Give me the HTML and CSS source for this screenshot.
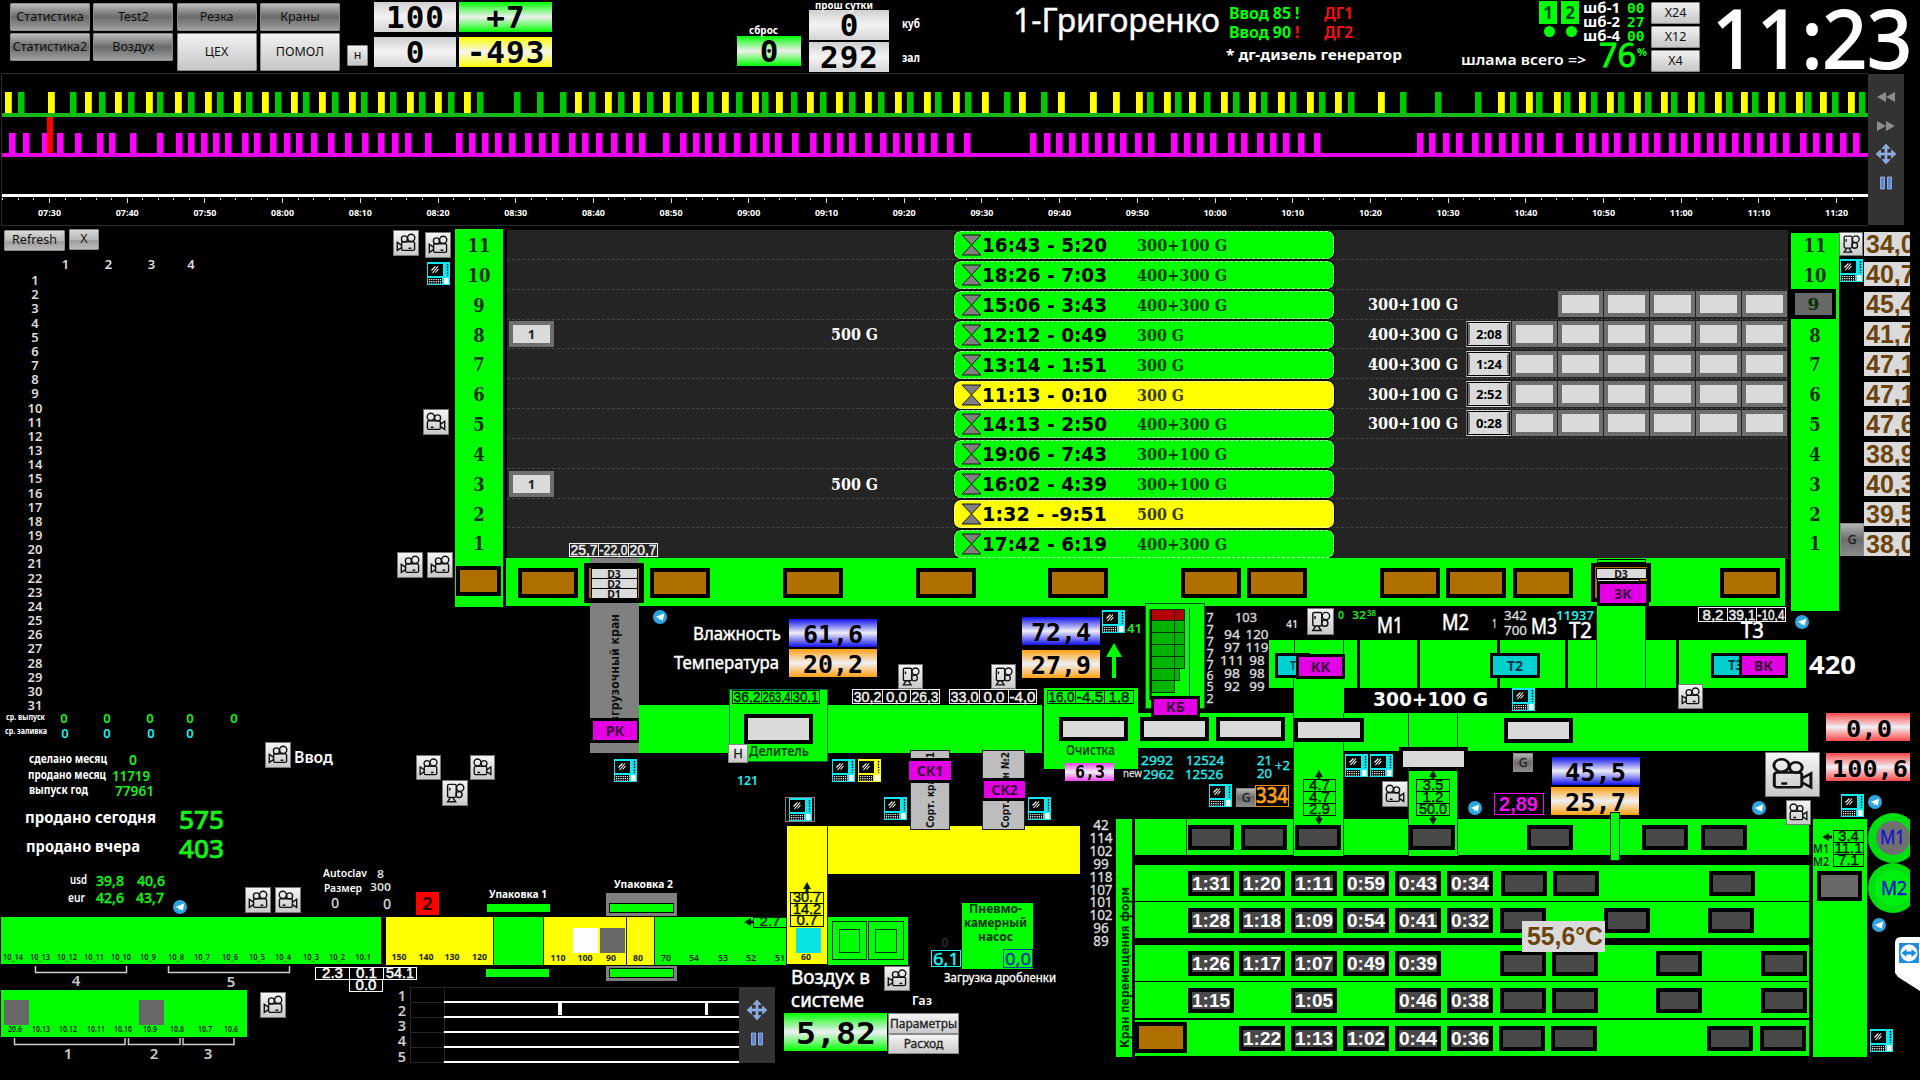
FILE: index.html
```html
<!DOCTYPE html>
<html lang="ru">
<head>
<meta charset="utf-8">
<title>ЦЕХ</title>
<link rel="stylesheet" href="styles.css">
</head>
<body>
<header class="topbar">
  <nav class="nav">
    <button class="btn dark">Статистика</button><button class="btn dark">Test2</button><button class="btn dark">Резка</button><button class="btn dark">Краны</button>
    <button class="btn dark">Статистика2</button><button class="btn dark">Воздух</button><button class="btn tall">ЦЕХ</button><button class="btn tall">ПОМОЛ</button>
  </nav>
  <button class="btn mini">н</button>
  <div class="counters">
    <b class="lcd gray">100</b><b class="lcd green">+7</b>
    <b class="lcd gray">0</b><b class="lcd yellow">-493</b>
  </div>
  <div class="reset"><span class="cap fit" data-w="29">сброс</span><b class="lcd green">0</b></div>
  <div class="prev"><span class="cap fit" data-w="58">прош сутки</span><b class="lcd gray">0</b><b class="lcd gray">292</b></div>
  <div class="units"><span class="fit" data-w="18">куб</span><span class="fit" data-w="18">зал</span></div>
  <div class="operator"><span class="fit" data-w="207">1-Григоренко</span></div>
  <div class="gens">
    <div class="gen"><span class="fit ok" data-w="62">Ввод 85</span><span class="ok mark">!</span><span class="fit bad" data-w="29">ДГ1</span></div>
    <div class="gen"><span class="fit ok" data-w="62">Ввод 90</span><span class="bad mark">!</span><span class="fit bad" data-w="29">ДГ2</span></div>
    <div class="note"><span class="fit" data-w="176">* дг-дизель генератор</span></div>
  </div>
  <div class="silo">
    <div class="silo-top">
      <div class="chip"><b>1</b><i></i></div><div class="chip"><b>2</b><i></i></div>
      <div class="silo-names"><span class="fit" data-w="37">шб-1</span><span class="fit" data-w="37">шб-2</span><span class="fit" data-w="37">шб-4</span></div>
      <div class="silo-vals"><span>00</span><span>27</span><span>00</span></div>
    </div>
    <div class="silo-sum"><span class="fit total" data-w="125">шлама всего =&gt;</span><span class="fit pct" data-w="37">76</span><span class="sign">%</span></div>
  </div>
  <div class="zooms"><button class="btn">X24</button><button class="btn">X12</button><button class="btn">X4</button></div>
  <div class="clock"><span class="fit" data-w="200">11:23</span></div>
</header>

<section class="timeline">
  <svg id="chart" width="1867" height="153" viewBox="1 73 1867 153"></svg>
  <div class="tools">
    <svg width="36" height="151" viewBox="1868 74 36 151">
      <g fill="#8c8c8c"><path d="M1886 92v10l-9-5zM1895 92v10l-9-5zM1877 121v10l9-5zM1886 121v10l9-5z"/></g>
      <use href="#move" x="1876" y="144"/><use href="#pause" x="1876" y="173"/>
    </svg>
  </div>
</section>

<main class="mimic">
  <section class="month">
    <div class="month-btns"><button class="btn mid refresh">Refresh</button><button class="btn mid close">X</button></div>
    <div class="month-head"><span>1</span><span>2</span><span>3</span><span>4</span></div>
    <ol class="days" id="days"></ol>
  </section>
  <section class="hall">
    <ol class="track left" id="trackL"></ol>
    <div class="lanes" id="lanes"></div>
    <ol class="track right" id="trackR"></ol>
    <div class="temps" id="temps"></div>
  </section>
  <svg id="scheme" class="scheme" width="1920" height="854" viewBox="0 226 1920 854">
    <defs>
      <linearGradient id="gBtn" x2="0" y2="1"><stop offset="0" stop-color="#f6f6f6"/><stop offset="1" stop-color="#c8c8c8"/></linearGradient>
      <linearGradient id="gDark" x2="0" y2="1"><stop offset="0" stop-color="#b8b8b8"/><stop offset=".5" stop-color="#6c6c6c"/><stop offset="1" stop-color="#8c8c8c"/></linearGradient>
      <symbol id="cam" viewBox="0 0 26 26" overflow="visible">
        <g fill="none" stroke="#111" stroke-width="1.4"><circle cx="11.4" cy="8.9" r="3"/><circle cx="18.2" cy="7.8" r="3.6"/><rect x="8.6" y="11.8" width="13" height="8.6" rx="1.4"/><path d="M8.5 15.2 4.3 12.4v8l4.2-2.8M15.5 18.2h2.8"/></g>
      </symbol>
      <symbol id="term" viewBox="0 0 23 23">
        <path fill="currentColor" d="M0 0h23v23H0z"/><path fill="#000" d="M1 2h15v12H1zM1 16h14v6H1z"/>
        <path stroke="#000" stroke-width="1.4" stroke-dasharray="1.4 1.4" d="M20.500 2v12"/>
        <path stroke="#fff" stroke-width="1.1" fill="none" d="M4.5 8.5l4-4M5.500 11l5.500-6.500M8.500 10.500l3-3.500"/>
        <path stroke="#fff" stroke-width="1" stroke-dasharray="1.200 1" d="M2 17.500h12M2 19.500h12M2 21.200h12"/><path fill="#fff" d="M17 16h4.500v6H17z"/>
      </symbol>
      <symbol id="tg" viewBox="0 0 14 14"><circle cx="7" cy="7" r="7" fill="#2ca5e0"/><path fill="#fff" d="M2.500 7 11.200 3.400 9.800 10.800 7.200 9 6 10.300 5.700 8z"/></symbol>
      <symbol id="move" viewBox="0 0 20 20" width="20" height="20"><path fill="#7fa8e8" stroke="#b9d0f6" stroke-width=".5" d="M10 0l4 4.500h-3V9h4.500V6L20 10l-4.500 4v-3H11v4.500h3L10 20l-4-4.500h3V11H4.500v3L0 10l4.500-4v3H9V4.500H6z"/></symbol>
      <symbol id="pause" viewBox="0 0 20 20" width="20" height="20"><path fill="#5f86cc" stroke="#9dbaf0" stroke-width=".8" d="M4.500 4h4v12h-4zM11.500 4h4v12h-4z"/></symbol>
    </defs>
  </svg>
</main>
<script src="script.js"></script>
</body>
</html>
```
FILE: styles.css
```css
* { box-sizing: border-box; }
body { margin: 0; width: 1920px; height: 1080px; overflow: hidden; background: #000; color: #fff; font-family: "Noto Sans", "Liberation Sans", sans-serif; }
ol { list-style: none; margin: 0; padding: 0; }

/* buttons */
.btn { border: 1px solid #8a8a8a; border-radius: 1px; padding: 0; margin: 0; color: #111; font: 12.500px/1 "Noto Sans", sans-serif; background: linear-gradient(#f2f2f2, #c6c6c6); white-space: nowrap; }
.btn.dark { background: linear-gradient(#bdbdbd 0, #8a8a8a 30%, #6a6a6a 50%, #8e8e8e 85%, #a5a5a5); }
.btn.mid { background: linear-gradient(#d8d8d8, #b9b9b9 50%, #9d9d9d 55%, #bbb); }

/* numeric displays */
.lcd { display: flex; align-items: center; justify-content: center; height: 30px; color: #000; font: bold 31px/1 "DejaVu Sans Mono", monospace; letter-spacing: 1px; padding-left: 1px; }
.lcd.gray { background: linear-gradient(#cfcfcf, #f4f4f4 50%, #d4d4d4); }
.lcd.green { background: linear-gradient(#0f0, #f0f0f0 50%, #0f0); }
.lcd.yellow { background: linear-gradient(#ff0, #f4f4f0 50%, #ff0); }
.fit { display: inline-block; white-space: nowrap; transform-origin: 0 50%; }

/* top bar */
.topbar { display: flex; align-items: flex-start; height: 73px; }
.nav { display: grid; grid-template-columns: repeat(4, 80px); grid-auto-rows: 28px; gap: 2px 3.300px; margin: 3px 0 0 10px; width: 330px; }
.nav .tall { height: 38px; }
.mini { width: 21px; height: 21px; margin: 45px 0 0 7px; }
.counters { display: grid; grid-template-columns: 82px 93px; gap: 5px 3px; margin: 2px 0 0 6px; }
.reset { width: 64px; margin: 24px 0 0 185px; }
.reset .cap { font: bold 11px/12px "Noto Sans", sans-serif; margin-left: 12px; display: block; }
.prev { width: 80px; margin-left: 8px; }
.prev .cap { font: bold 10.500px/11px "Noto Sans", sans-serif; margin: 0 0 -1px 6px; display: block; }
.prev .lcd + .lcd { margin-top: 2px; }
.units { display: flex; flex-direction: column; gap: 20px; width: 20px; margin: 17px 0 0 13px; font: bold 11.500px/14px "Noto Sans", sans-serif; }
.operator { width: 213px; margin-left: 91px; font-size: 32px; line-height: 39px; -webkit-text-stroke: .4px #fff; }
.gens { width: 235px; padding-top: 4px; font: bold 15.500px/18.500px "Noto Sans", sans-serif; }
.gen { display: flex; padding-left: 3px; }
.mark { width: 33px; padding-left: 4px; }
.ok { color: #0f0; }
.bad { color: #f01010; }
.note { margin-top: 4px; font-size: 14.500px; }
.silo { width: 190px; }
.silo-top { display: flex; height: 44px; padding-left: 78px; }
.chip { width: 18px; margin: 1px 4px 0 0; }
.chip b { display: block; height: 23px; background: #0f0; color: #042; font: bold 17px/23px "Noto Sans", sans-serif; text-align: center; }
.chip i { display: block; width: 11px; height: 11px; margin: 2px 0 0 5px; border-radius: 50%; background: #0f0; }
.silo-names, .silo-vals { display: flex; flex-direction: column; font: bold 15px/14px "Noto Sans", sans-serif; width: 44px; }
.silo-vals { width: 20px; color: #0f0; font: bold 14.500px/14px "DejaVu Sans Mono", monospace; padding-top: 1px; }
.silo-sum { display: flex; line-height: 28px; }
.total { font-weight: 600; font-size: 15px; padding-top: 1px; margin-right: 13px; }
.pct { color: #0f0; font-size: 32px; line-height: 22px; -webkit-text-stroke: .8px #0f0; }
.sign { color: #0f0; font: bold 11px/16px "Noto Sans", sans-serif; padding-left: 1px; }
.zooms { display: flex; flex-direction: column; gap: 2px; margin-top: 2px; width: 61px; }
.zooms .btn { width: 49px; height: 22px; }
.clock { font-size: 80px; line-height: 73px; -webkit-text-stroke: 2px #fff; }

/* timeline */
.timeline { display: flex; height: 153px; padding-left: 1px; }
.tools { width: 36px; height: 151px; margin-top: 1px; background: #333; }
svg { display: block; }

/* mimic canvas */
.mimic { position: relative; height: 854px; }
.scheme { position: absolute; inset: 0; }
.month { position: absolute; left: 4px; top: 3px; width: 240px; }
.month-btns { display: flex; gap: 4px; }
.refresh { width: 61px; height: 21px; margin-top: 1px; }
.close { width: 30px; height: 21px; }
.month-head { display: flex; padding: 4px 0 0 40px; font: 600 13px/18px "Noto Sans", sans-serif; color: #ddd; }
.month-head span { width: 43px; text-align: center; }
.month-head span:last-child { width: 36px; }
.days { width: 62px; font: 600 13px/14.170px "Noto Sans", sans-serif; color: #ddd; text-align: center; }

.hall { position: absolute; left: 455px; top: 3px; display: flex; align-items: flex-start; }
.track { width: 48px; height: 378px; padding-top: 2px; background: #0f0; color: #063006; text-align: center; font: bold 19px/29.850px "DejaVu Serif", serif; }
.track li { height: 29.850px; transform: scaleX(.86); }
.track.right { margin: 4px 0 0 3px; padding-top: 0; }
.track.right li:first-child { margin-top: -2px; }
.track .stop { margin: -1.500px 3px 1.500px 0; border: 4px solid #000; background: #686868; line-height: 22px; transform: none; font-size: 17px; }
.lanes { width: 1281px; height: 328px; margin: 1px 0 0 4px; background: #242424; }
.lane { display: flex; align-items: center; height: 29.850px; padding-left: 2px; border-bottom: 1px dashed #464646; }
.lane:last-child { border: 0; }
.slot { width: 446px; display: flex; align-items: center; padding-top: 1px; }
.tray { width: 45px; height: 26px; border: 4px solid #6e6e6e; background: #dadada; color: #222; font: bold 13px/18px "Noto Sans", sans-serif; text-align: center; flex: none; box-shadow: 1px 0 #222; margin-right: 1px; }
.kind { font: bold 17px/20px "DejaVu Serif", serif; transform-origin: 0 50%; white-space: nowrap; }
.slot .kind { margin-left: auto; width: 123px; }
.cycle { width: 380px; height: 28px; display: flex; align-items: center; border: 1px dashed #b8ffb8; border-radius: 7px; background: #0f0; color: #000; box-shadow: 0 0 0 1px #0a0a0a; flex: none; margin-top: 2px; }
.cycle.warn { background: #ff0; border-color: #ffc; }
.cycle svg { margin-left: 6px; flex: none; }
.cycle time { width: 155px; font: bold 19px/24px "DejaVu Sans", sans-serif; }
.cycle .kind { color: #064406; }
.cycle.warn .kind { color: #3c3a04; }
.out { width: 454px; display: flex; align-items: center; padding-left: 34px; }
.out .kind { width: 98px; }
.trays { display: flex; margin-left: auto; }
.tray.timed { outline: 1px solid #000; outline-offset: -2px; border-top-color: #dadada; border-bottom-color: #dadada; color: #000; padding-left: 1px; }
.temps { display: flex; flex-direction: column; gap: 6px; width: 46px; margin: 3px 0 0 25px; }
.temps span { height: 24px; overflow: hidden; background: #dadada; color: #6b430e; font: bold 25px/25px "Liberation Sans", Arial, sans-serif; padding-left: 2px; }
```
FILE: script.js
```js
// ---------- header labels: squeeze text to the column width ----------
function fitAll() {
  document.querySelectorAll('.fit').forEach(e => {
    const w = +e.dataset.w;
    e.style.width = 'max-content';
    const n = e.getBoundingClientRect().width;
    e.style.transform = `scaleX(${w / n})`;
    e.style.marginRight = (w - n + parseFloat(getComputedStyle(e).marginRight)) + 'px';
  });
}

// ---------- timeline ----------
const yellow = [5,48,85,115,146,175,205,234,262,291,319,349,378,407,435,464,575,605,633,663,692,722,752,776,807,836,865,895,924,953,982,1019,1058,1090,1113,1136,1164,1189,1221,1249,1278,1307,1335,1378,1498,1526,1554,1579,1607,1634,1661,1688,1715,1741,1768,1796,1820,1848];
const green = [18,70,99,128,157,188,217,246,275,303,332,361,390,419,448,477,514,537,560,589,618,647,676,707,736,762,791,820,849,878,907,935,965,1004,1041,1147,1175,1204,1233,1261,1290,1319,1348,1400,1435,1475,1510,1536,1564,1591,1618,1645,1671,1698,1726,1752,1779,1805,1832,1859];
const magenta = [9,23,42,57,75,97,109,130,157,176,188,201,213,225,242,254,270,284,296,311,328,345,362,378,392,405,425,456,469,482,495,509,525,539,552,569,582,596,611,626,639,663,680,693,705,719,734,750,763,775,792,810,824,837,849,865,880,893,905,918,931,947,964,1030,1044,1056,1069,1082,1095,1108,1120,1135,1148,1171,1184,1197,1210,1228,1241,1257,1270,1283,1298,1314,1417,1429,1443,1456,1472,1485,1499,1512,1525,1537,1556,1576,1589,1602,1614,1629,1642,1654,1669,1681,1694,1707,1719,1732,1744,1757,1770,1783,1800,1813,1826,1840,1853];
{
  let s = '<path fill="none" stroke="#2c2c2c" d="M1.5 226V73.5H1904M1.5 225.5H1904"/>';
  const bars = (a, y, h, c, w) => { for (const x of a) s += `<rect x="${x}" y="${y}" width="${w}" height="${h}" fill="${c}"/>`; };
  bars(yellow, 92, 21, '#ff0', 6.8);
  bars(green, 92, 21, '#00c800', 6.5);
  bars(magenta, 133, 20, '#f0f', 6.5);
  s += '<rect x="2" y="113" width="1866" height="4" fill="#18b818"/><rect x="2" y="153" width="1866" height="4" fill="#e800e8"/><rect x="47" y="117" width="6" height="36" fill="#f00"/><rect x="2" y="194" width="1866" height="3" fill="#fff"/>';
  for (let i = -3; i <= 116; i++) {
    const x = 49.5 + i * 15.540, major = i % 5 === 0;
    s += `<rect x="${Math.round(x - .5)}" y="198" width="1" height="${major ? 5 : 2}" fill="#ddd"/>`;
    if (major) {
      const m = 450 + i * 2, t = String(Math.floor(m / 60)).padStart(2, '0') + ':' + String(m % 60).padStart(2, '0');
      s += `<text x="${x - 11.500}" y="216" font-size="9" font-weight="bold" fill="#fff" textLength="23" lengthAdjust="spacingAndGlyphs">${t}</text>`;
    }
  }
  document.getElementById('chart').innerHTML = s;
}

// ---------- month list and hall ----------
document.getElementById('days').innerHTML = Array.from({ length: 31 }, (_, i) => `<li>${i + 1}</li>`).join('');
const track = sel => Array.from({ length: 11 }, (_, i) => `<li${11 - i === sel ? ' class="stop"' : ''}>${11 - i}</li>`).join('');
document.getElementById('trackL').innerHTML = track(0);
document.getElementById('trackR').innerHTML = track(9);
document.getElementById('temps').innerHTML = ['34,0','40,7','45,4','41,7','47,1','47,1','47,6','38,9','40,3','39,5','38,0'].map(t => `<span>${t}</span>`).join('');

const kind = (t, full) => `<span class="kind fitk" data-w="${t.length > 6 ? 90 : 47}">${t}</span>`;
const lanes = [
  ['16:43 - 5:20', '300+100 G'], ['18:26 - 7:03', '400+300 G'],
  ['15:06 - 3:43', '400+300 G', '', '300+100 G', '', 5],
  ['12:12 - 0:49', '300 G', '1', '400+300 G', '2:08', 6],
  ['13:14 - 1:51', '300 G', '', '400+300 G', '1:24', 6],
  ['11:13 - 0:10', '300 G', '', '300+100 G', '2:52', 6],
  ['14:13 - 2:50', '400+300 G', '', '300+100 G', '0:28', 6],
  ['19:06 - 7:43', '300+100 G'], ['16:02 - 4:39', '300+100 G', '1'],
  ['1:32 - -9:51', '500 G'], ['17:42 - 6:19', '400+300 G']];
document.getElementById('lanes').innerHTML = lanes.map(([t, k, inn, outK, first, n], i) => `
  <div class="lane">
    <div class="slot">${inn ? `<span class="tray">${inn}</span>${kind('500 G')}` : ''}</div>
    <div class="cycle${i === 5 || i === 9 ? ' warn' : ''}"><svg width="21" height="22"><path d="M1 1H20L1 21H20Z" fill="#808080" stroke="#111"/></svg><time><span class="fit" data-w="125">${t}</span></time>${kind(k)}</div>
    <div class="out">${outK ? kind(outK) : ''}<div class="trays">${first ? `<span class="tray timed">${first}</span>` : ''}${'<span class="tray"></span>'.repeat(n || 0)}</div></div>
  </div>`).join('');
fitAll();
document.querySelectorAll('.fitk').forEach(e => {
  const r = document.createRange(); r.selectNodeContents(e);
  e.style.transform = `scaleX(${e.dataset.w / r.getBoundingClientRect().width})`;
});

// ---------- plant scheme ----------
let out = '', gid = 0;
const G = '#00ff00', K = '#000', M = '#e400e4', B = '#b07000', L = '#dadada', Y = '#ffff00', C = '#20f0f0', W = '#fff', D = '#484848', S = '#ddd', N = '#18f018';
const R = (x1, y1, x2, y2, f, st, sw = 1) => {
  const o = st ? sw / 2 : 0;
  out += `<rect x="${x1 + o}" y="${y1 + o}" width="${x2 - x1 - 2 * o}" height="${y2 - y1 - 2 * o}" fill="${f || 'none'}"${st ? ` stroke="${st}" stroke-width="${sw}"` : ''}/>`;
};
const fonts = { s: '"Noto Sans"', m: '"DejaVu Sans Mono"', d: '"DejaVu Sans"', a: '"Liberation Sans"', r: '"DejaVu Serif"' };
// regular weight gets a hairline outline so it stays readable on the dark canvas
const ink = (c, w, size) => w < 600 ? ` stroke="${c}" stroke-width="${(size * .025).toFixed(2)}"` : '';
// text from x1 to x2 on baseline y
const T = (t, x1, x2, y, size, c = W, w = 400, f = 's') => {
  out += `<text x="${x1}" y="${y}" font-size="${size}" fill="${c}"${ink(c, w, size)} font-weight="${w}" font-family='${fonts[f]}' textLength="${x2 - x1}" lengthAdjust="spacingAndGlyphs">${t}</text>`;
};
const TC = (t, cx, y, size, c = W, w = 400, f = 's') => {
  out += `<text x="${cx}" y="${y}" text-anchor="middle" font-size="${size}" fill="${c}"${ink(c, w, size)} font-weight="${w}" font-family='${fonts[f]}'>${t}</text>`;
};
const TV = (t, x, yb, len, size, c = '#111') => {
  out += `<text transform="translate(${x} ${yb}) rotate(-90)" font-size="${size}" font-weight="bold" fill="${c}" font-family='${fonts.d}' textLength="${len}" lengthAdjust="spacingAndGlyphs">${t}</text>`;
};
const V = (x1, y1, x2, y2, c, t, tx1, tx2, by, size) => {
  out += `<linearGradient id="v${++gid}" x2="0" y2="1"><stop offset="0" stop-color="${c}"/><stop offset=".5" stop-color="#f0f0f4"/><stop offset="1" stop-color="${c}"/></linearGradient>`;
  R(x1, y1, x2, y2, `url(#v${gid})`);
  T(t, tx1, tx2, by, size, '#000', 700, 'm');
};
const cam = (x, y, mode = '', w = 26, h = w, f = 'gBtn') => {
  R(x, y, x + w, y + h, `url(#${f})`, '#777');
  const tr = mode === 'flip' ? 'matrix(-1 0 0 1 26 0)' : mode === 'rot' ? 'rotate(90 13 13) matrix(-1 0 0 1 26 0)' : '';
  out += `<svg x="${x}" y="${y}" width="${w}" height="${h}" viewBox="0 0 26 26" preserveAspectRatio="none"><g transform="${tr}"><use href="#cam" width="26" height="26"/></g></svg>`;
};
const term = (x, y, c = '#10e8f0') => { out += `<use href="#term" x="${x}" y="${y}" width="23" height="23" color="${c}"/>`; };
const tg = (x, y) => { out += `<use href="#tg" x="${x - 7}" y="${y - 7}" width="14" height="14"/>`; };
const btn = (x1, y1, x2, y2, t, f = 'gDark', size = 12) => { R(x1, y1, x2, y2, `url(#${f})`, '#888'); TC(t, (x1 + x2) / 2, (y1 + y2) / 2 + size * .36, size, '#222'); };
const line = (d, c = K, w = 1) => { out += `<path d="${d}" fill="none" stroke="${c}" stroke-width="${w}"/>`; };
const cells = (xs, y1, y2, vals, c, bg, size = 14) => vals.forEach((v, i) => {
  const w = xs[i + 1] - xs[i], tw = Math.min(w - 2, v.length * 7);
  R(xs[i], y1, xs[i + 1] + 1, y2, bg, c);
  out += `<text x="${xs[i] + .5 + (w - tw) / 2}" y="${y2 - 2}" font-size="${size}" fill="${c}" stroke="${c}" stroke-width=".45" font-family='${fonts.a}' textLength="${tw}" lengthAdjust="spacingAndGlyphs">${v}</text>`;
});
const stack = (x1, x2, ys, vals) => vals.forEach((v, i) => cells([x1, x2 - 1], ys[i], ys[i + 1] + 1, [v], '#021402', null, 14.500));
const arrow = (x, y, dir) => {
  const p = { up: 'M0-5 4 2H1.500V5H-1.500V2H-4Z', down: 'M0 5 4-2H1.500V-5H-1.500V-2H-4Z', left: 'M-5 0 2-4V-1.500H5V1.500H2V4Z' }[dir];
  out += `<path transform="translate(${x} ${y})" d="${p}" fill="#021"/>`;
};
const crane = (x1, y1, x2, y2, t, f = M) => { R(x1, y1, x2, y2, f, K, 3); TC(t, (x1 + x2) / 2, (y1 + y2) / 2 + 5, 14, f === M ? '#3a003a' : '#034', 700); };

// camera and terminal buttons beside the hall
cam(393, 230, '', 26, 26); cam(425, 232); term(427, 262); cam(423, 409, 'flip'); cam(397, 552); cam(427, 552, '', 26);
cam(1839, 232, 'rot', 24, 24); term(1840, 259); btn(1840, 523, 1864, 556, 'G');

// transfer lane under the hall
R(456, 566, 501, 596, B, K, 4);
R(506, 558, 1785, 606, G);
[518, 650, 783, 916, 1048, 1181, 1247, 1380, 1446, 1513, 1720].forEach(x => R(x, 568, x + 60, 598, B, K, 4));
cells([569, 598, 628, 657], 543, 557, ['25,7', '-22,0', '20,7'], '#eee', '#242424');
R(590, 558, 639, 753, '#808080');
TV('Разгрузочный кран', 619, 738, 124, 13);
R(584, 563, 644, 603, B, K, 5);
[['D3', 568], ['D2', 578], ['D1', 588]].forEach(([t, y]) => { R(591, y, 638, y + 11, L, K); TC(t, 614, y + 9.500, 10.500, '#111', 700); });
crane(590, 718, 640, 743, 'РК');
term(614, 759); tg(660, 617);
R(1591, 563, 1651, 602, B, K, 4); R(1597, 559, 1646, 563, G, K); R(1596, 568, 1647, 579, L, K); R(1597, 579, 1640, 590, L, K); TC('D3', 1621, 577.500, 10.500, '#111', 700);
R(1597, 604, 1646, 688, G);

// climate
T('Влажность', 693, 781, 640, 17.500); T('Температура', 674, 779, 669, 17.500);
V(789, 619, 877, 647, '#1010f0', '61,6', 803, 863, 643, 25); V(789, 649, 877, 677, '#ffa010', '20,2', 803, 863, 673, 25);
V(1022, 617, 1100, 645, '#1010f0', '72,4', 1031, 1091, 641, 25); V(1022, 650, 1100, 678, '#ffa010', '27,9', 1031, 1091, 674, 25);
term(1102, 610); T('41', 1127, 1142, 633, 13, N, 600);
out += `<path d="M1114 643l8 14h-6v21h-4v-21h-6z" fill="${G}"/>`;

// splitter line
R(639, 705, 1042, 753, G);
R(729, 689, 828, 762, G, '#064');
R(744, 714, 813, 744, L, K, 4);
cells([732, 761, 791, 819], 690, 704, ['36,2', '263,4', '30,1'], '#021a02', null);
T('Делитель', 749, 809, 756, 14, '#054005', 600);
btn(728, 744, 748, 763, 'Н', 'gBtn', 13);
T('121', 737, 758, 785, 13, C, 600);
cam(898, 664, 'rot', 25, 25); cam(991, 664, 'rot', 25, 25);
cells([852, 882, 910, 939], 689, 704, ['30,2', '0,0', '26,3'], '#eee', K);
cells([949, 979, 1008, 1036], 689, 704, ['33,0', '0,0', '-4,0'], '#eee', K);
term(832, 759); term(858, 759, '#ffff20'); term(884, 797); term(1028, 797); term(789, 798);
out += '<rect x="785.5" y="797.5" width="29" height="24" fill="none" stroke="#fff" stroke-dasharray="1 1"/>';
R(787, 826, 827, 964, Y); R(828, 826, 1080, 874, Y);
R(910, 750, 950, 830, '#bdbdbd', '#222'); R(982, 750, 1025, 830, '#bdbdbd', '#222');
TV('Сорт. кран №1', 934, 828, 76, 11); TV('Сорт. кран №2', 1009, 828, 76, 11);
crane(906, 758, 954, 783, 'СК1'); crane(981, 778, 1028, 801, 'СК2');

// cleaning
R(1044, 688, 1138, 769, G);
cells([1047, 1075, 1104, 1133], 690, 704, ['16,0', '-4,5', '1,8'], '#021a02', null);
R(1059, 717, 1128, 741, L, K, 4);
T('Очистка', 1066, 1115, 755, 13.500, '#054005', 600);
V(1065, 763, 1114, 781, '#f040f0', '6,3', 1075, 1105, 778, 17);

// КБ column
R(1137, 713, 1293, 748, G);
R(1145, 603, 1205, 709, G, '#052');
[[609, 33, '#b40000'], [620, 33], [632, 33], [644, 33], [656, 33], [668, 28], [680, 23]].forEach(([y, w, c]) => R(1151, y, 1151 + w + 1, y + 13, c || '#00b400', '#031'));
line('M1174.5 609V693M1189.5 608V696', '#031'); line('M1150.5 609V700', K, 2);
crane(1151, 696, 1200, 718, 'КБ');
[1140, 1216].forEach(x => R(x, 717, x + 69, 741, L, K, 4));
['7', '7', '7', '7', '7', '6', '5', '2'].forEach((t, i) => TC(t, 1210, [622, 634, 646, 658, 669, 680, 691, 703][i], 12.500, S));
T('103', 1235, 1257, 622, 12.500, S);
[['94', '120'], ['97', '119'], ['111', '98'], ['98', '98'], ['92', '99']].forEach(([a, b], i) => { const l = a.length * 8, r = b.length * 7.700; T(a, 1232 - l / 2, 1232 + l / 2, 639 + 13 * i, 12.500, S); T(b, 1257 - r / 2, 1257 + r / 2, 639 + 13 * i, 12.500, S); });
T('41', 1286, 1298, 628, 10.500, S, 600);
T('0', 1338, 1344, 619, 11, N, 600); T('32', 1352, 1366, 619, 11, N, 600); T('38', 1367, 1376, 616, 8, N, 600);

// M / T section
T('M1', 1377, 1403, 633, 21); T('M2', 1442, 1469, 630, 21); T('1', 1492, 1497, 628, 12, S);
T('342', 1504, 1527, 620, 12.500, S); T('700', 1504, 1527, 635, 12.500, S); T('M3', 1531, 1557, 634, 21);
T('11937', 1556, 1594, 620, 12.500, C, 600); T('T2', 1569, 1592, 638, 21); T('T3', 1741, 1764, 638, 21);
cells([1698, 1727, 1756, 1785], 607, 622, ['8,2', '39,1', '-10,4'], '#eee', K); tg(1802, 622);
[[1269, 1357], [1360, 1417], [1420, 1497], [1500, 1565], [1568, 1676], [1679, 1806]].forEach(([a, b]) => R(a, 640, b, 688, G));
line('M1294.5 640V688M1343.5 640V688M1596.5 606V688M1645.5 606V688', '#031');
crane(1275, 653, 1310, 678, '', '#00d0d0'); T('T', 1290, 1296, 670, 13, '#034', 600);
R(1294, 678, 1344, 856, G);
crane(1296, 654, 1345, 679, 'КК'); crane(1490, 653, 1540, 678, 'T2', '#00d0d0');
crane(1711, 653, 1750, 678, '', '#00d0d0'); T('T3', 1728, 1743, 670, 14, '#034', 700); crane(1739, 653, 1788, 678, 'ВК');
crane(1597, 581, 1649, 606, 'ЗК');
T('420', 1809, 1856, 674, 25, W, 700);
T('300+100 G', 1373, 1488, 706, 19, W, 700, 'd');
term(1512, 688); cam(1307, 608, 'rot', 27, 27); cam(1678, 684, '', 25, 25);

// return lane
R(1343, 713, 1808, 751, G); line('M1408.5 713V751M1457.5 713V751M1343.5 713V856M1293.5 678V856', '#031');
R(1294, 718, 1364, 742, L, K, 4); R(1504, 718, 1573, 743, L, K, 4);
R(1409, 767, 1458, 856, G); R(1399, 747, 1468, 771, K); R(1403, 751, 1464, 767, L);
V(1826, 713, 1910, 741, '#ff4848', '0,0', 1846, 1892, 737, 23); V(1826, 753, 1910, 781, '#ff4848', '100,6', 1832, 1908, 777, 23);
btn(1513, 753, 1533, 772, 'G');
V(1552, 757, 1640, 785, '#1010f0', '45,5', 1565, 1626, 781, 25); V(1551, 787, 1639, 815, '#ffa010', '25,7', 1565, 1626, 811, 25);
R(1494, 793, 1544, 815, K, '#f0f'); T('2,89', 1499, 1538, 811, 20, '#f010f0', 700, 'a');
tg(1475, 808); tg(1759, 808); tg(1875, 802); cam(1765, 752, 'flip', 55, 45);
term(1841, 794);
T('2992', 1141, 1173, 765, 13, C); T('12524', 1186, 1224, 765, 13, C); T('21', 1257, 1272, 765, 13, C); T('+2', 1275, 1290, 770, 13, C);
T('new', 1123, 1142, 777, 11, '#ddd'); T('2962', 1143, 1174, 779, 13, C); T('12526', 1185, 1223, 779, 13, C); T('20', 1257, 1272, 778, 13, C);
term(1209, 784); btn(1236, 788, 1256, 807, 'G'); R(1255, 785, 1289, 807, K, '#f09010'); T('334', 1256, 1288, 803, 21, '#ffa010', 500);
term(1345, 754); term(1370, 754); cam(1382, 781, 'flip', 26);

// forms storage
['42', '114', '102', '99', '118', '107', '101', '102', '96', '89'].forEach((t, i) => TC(t, 1101, 830 + 12.900 * i, 13.500, S));
R(1116, 819, 1132, 1057, G); TV('Кран перемещения форм', 1129, 1048, 161, 12, '#031');
[[819, 855], [865, 901], [902, 938], [945, 981], [982, 1018], [1020, 1056]].forEach(([a, b]) => R(1135, a, 1809, b, G));
line('M1186.5 819V855M1293.500 819V855M1343.500 819V855M1408.500 767V855M1457.500 767V855', '#031');
[1188, 1241, 1295, 1409, 1527, 1642, 1701].forEach(x => R(x, 825, x + 46, 850, D, K, 4));
const cols = [1188, 1239, 1291, 1343, 1395, 1447];
[[871, ['1:31', '1:20', '1:11', '0:59', '0:43', '0:34'], [1501, 1553, 1709]],
 [908, ['1:28', '1:18', '1:09', '0:54', '0:41', '0:32'], [1500, 1604, 1708]],
 [951, ['1:26', '1:17', '1:07', '0:49', '0:39', ''], [1500, 1552, 1656, 1761]],
 [988, ['1:15', '', '1:05', '', '0:46', '0:38'], [1500, 1552, 1656, 1761]],
 [1026, ['', '1:22', '1:13', '1:02', '0:44', '0:36'], [1499, 1551, 1707, 1760]]].forEach(([y, times, free]) => {
  times.forEach((t, i) => { if (!t) return; R(cols[i], y, cols[i] + 46, y + 25, D, K, 4); T(t, cols[i] + 4, cols[i] + 42, y + 19, 18.500, W, 700, 'a'); });
  free.forEach(x => R(x, y, x + 46, y + 25, D, K, 4));
});
R(1135, 1022, 1187, 1053, B, K, 4);
R(1610, 812, 1620, 861, G, '#021');
R(1522, 921, 1605, 952, L); T('55,6°C', 1527, 1603, 945, 25, '#6b430e', 700, 'a');
stack(1303, 1336, [779, 791, 803, 815], ['4.7', '4.7', '2.9']); arrow(1319, 775, 'up'); arrow(1319, 820, 'down');
stack(1416, 1450, [779, 791, 803, 815], ['3.5', '1.2', '50.0']); arrow(1433, 775, 'up'); arrow(1433, 820, 'down');
R(1813, 819, 1867, 1057, G);
stack(1833, 1864, [830, 842, 854, 866], ['3.4', '11.1', '7.1']); arrow(1827, 837, 'left');
T('M1', 1813, 1829, 853, 12, '#031', 600); T('M2', 1813, 1829, 866, 12, '#031', 600);
R(1817, 871, 1862, 901, '#686868', K, 4);
cam(1786, 800, 'flip', 25, 25, 'gBtn');
out += `<svg x="1868" y="812" width="42" height="102"><circle cx="25" cy="26" r="25" fill="#00e010"/><circle cx="25" cy="26" r="17" fill="#707070"/><circle cx="25" cy="76" r="25" fill="#00e010"/><circle cx="25" cy="76" r="18" fill="#00f010"/></svg>`;
T('М1', 1880, 1905, 844, 20, '#1818d0'); T('М2', 1881, 1907, 895, 20, '#1818d0');
tg(1879, 925); term(1870, 1029);
out += '<path d="M1920 937h-19q-6 0-6 6v30l3 4 22 14z" fill="#fff"/><rect x="1899" y="943" width="20" height="20" fill="#1c8ce0"/><circle cx="1909" cy="953" r="8.500" fill="#fff"/><path d="M1901.500 953l5-4v2.500h5v-2.500l5 4-5 4v-2.500h-5v2.500z" fill="#1c8ce0"/>';

// monthly output
T('ср. выпуск', 6, 45, 720, 8, W, 700); T('ср. заливка', 5, 47, 734, 8, W, 700);
[64, 107, 150, 190, 234].forEach(x => TC('0', x, 723, 13, N, 600)); [65, 107, 151, 190].forEach(x => TC('0', x, 738, 13, C, 600));
T('сделано месяц', 29, 107, 763, 11.500, W, 700); T('0', 129, 137, 765, 13.500, N, 600);
T('продано месяц', 28, 106, 779, 11.500, W, 700); T('11719', 112, 150, 781, 13.500, N, 600);
T('выпуск год', 29, 88, 794, 11.500, W, 700); T('77961', 115, 154, 796, 13.500, N, 600);
T('продано сегодня', 25, 156, 823, 15.500, W, 700); T('575', 179, 224, 829, 26, N, 500);
T('продано вчера', 26, 140, 852, 15.500, W, 700); T('403', 179, 224, 858, 26, N, 500);
T('usd', 70, 87, 884, 12, W, 600); T('39,8', 96, 124, 886, 13.500, N, 500); T('40,6', 137, 165, 886, 13.500, N, 500);
T('eur', 68, 85, 902, 12, W, 600); T('42,6', 96, 124, 903, 13.500, N, 500); T('43,7', 136, 164, 903, 13.500, N, 500);
tg(180, 907); cam(265, 742); T('Ввод', 294, 333, 763, 16, W, 600);
cam(416, 755, '', 25); cam(442, 780, 'rot', 26); cam(470, 755, 'flip', 25); cam(245, 887); cam(275, 887, 'flip');
T('Autoclav', 323, 367, 877, 11, W, 600); T('8', 377, 384, 878, 11, S, 600); T('Размер', 324, 362, 892, 11, W, 600); T('300', 370, 391, 891, 11, S, 600);
TC('0', 335, 908, 13.500, S); TC('0', 387, 909, 13.500, S);
R(416, 892, 439, 915, '#f00'); TC('2', 427.500, 910, 18, '#300', 700);

// packing line
R(1, 917, 381, 964, G);
[13, 40, 67, 94, 121, 148, 176, 202, 230, 257, 283, 311, 337, 363].forEach((x, i) => { const n = 14 - i, w = n > 9 ? 10 : 8; T(n > 1 ? '10_' + n : '10.1', x - w, x + w, 959.500, 8, '#020', 600); });
R(386, 917, 493, 965, Y); R(494, 917, 543, 965, G); R(544, 917, 654, 965, Y); line('M626.5 917V965M654.500 917V965M543.500 917V965M493.500 917V965', '#220'); R(655, 917, 786, 965, G);
[[399, '150'], [426, '140'], [452, '130'], [479.500, '120']].forEach(([x, t]) => T(t, x - 7.500, x + 7.500, 960, 9, '#220', 700));
[[558, '110'], [585, '100'], [611, '90'], [638, '80'], [666, '70'], [694, '54'], [723, '53'], [751, '52'], [780, '51']].forEach(([x, t], i) => T(t, x - t.length * 2.500, x + t.length * 2.500, 961, 9, i < 4 ? '#220' : '#020', i < 4 ? 700 : 600));
T('Упаковка 1', 489, 547, 898, 10, W, 700); R(487, 904, 550, 912, G); R(486, 969, 549, 977, G);
T('Упаковка 2', 614, 673, 888, 10, W, 700); R(606, 893, 677, 916, '#808080'); R(609, 903, 674, 913, G, K); R(606, 966, 677, 981, '#808080'); R(609, 968, 674, 978, G, K);
R(573, 928, 598, 953, W); R(600, 928, 625, 953, '#686868');
arrow(749, 922, 'left'); cells([753, 786], 917, 928, ['2.7'], '#031', null, 13);
line('M827.500 826V964', '#220'); R(828, 917, 908, 965, G);
[[832, 867], [868, 904]].forEach(([a, b]) => { R(a, 921, b, 960, null, '#031'); R(a + 7, 929, b - 7, 953, null, '#031'); });
arrow(807, 887, 'up'); stack(790, 824, [892, 903, 915, 926], ['30.7', '14.2', '0.7']);
R(796, 928, 821, 953, '#08e4e4'); T('60', 801, 811, 960, 9, '#220', 700);
line('M35.500 966V972.500H126.500V966M168.500 966V972.500H289.500V966M14.500 1038V1044.500H125V1038M128.500 1038V1044.500H180V1038M183 1038V1044.500H234V1038', '#ccc', 1.500);
[['4', 76, 986], ['5', 231, 987], ['1', 68, 1059], ['2', 154, 1059], ['3', 208, 1059]].forEach(([t, x, y]) => TC(t, x, y, 15, '#ccc', 600));
cells([315, 349, 383, 416], 967, 980, ['2.3', '0.1', '54.1'], W, K); cells([349, 382], 979, 992, ['0.0'], W, K);
R(1, 990, 247, 1037, G); R(4, 1000, 29, 1025, '#686868'); R(139, 1000, 164, 1025, '#686868');
[['20.6', 15], ['10.13', 41], ['10.12', 68], ['10.11', 96], ['10.10', 123], ['10.9', 150], ['10.8', 177], ['10.7', 205], ['10.6', 231]].forEach(([t, x]) => { const w = t.length > 4 ? 9 : 7; T(t, x - w, x + w, 1032, 8, '#020', 600); });
cam(260, 992);

// mini chart
line('M410.500 987V1063M444.500 987V1063M410 987.500H739M410 1002.500H739M410 1017.500H739M410 1032.500H739M410 1047.500H739M410 1062.500H739', '#282828');
[1, 2, 3, 4, 5].forEach(n => { TC(n, 402, 985.500 + 15.200 * n, 14.500, '#ccc', 600); R(444, 986 + 15 * n, 739, 988 + 15 * n, W); });
R(558, 1003, 562, 1015, W); R(705, 1003, 708, 1015, W);
R(739, 987, 775, 1063, '#333'); out += '<use href="#move" x="747" y="1000"/><use href="#pause" x="747" y="1029"/>';

// air, gas, pump
T('Воздух в', 791, 870, 984, 20); T('системе', 791, 864, 1007, 20); cam(884, 966, '', 26, 25);
T('Газ', 912, 932, 1005, 12.500, W, 600);
V(784, 1013, 887, 1051, '#00ff00', '5,82', 796, 876, 1044, 31);
btn(888, 1013, 959, 1034, 'Параметры', 'gBtn'); btn(888, 1034, 959, 1054, 'Расход', 'gBtn');
R(962, 903, 1033, 969, G); T('Пневмо-', 969, 1022, 913, 13, '#033003', 700); T('камерный', 964, 1027, 927, 13, '#033003', 700); T('насос', 978, 1013, 941, 13, '#033003', 700);
TC('0', 945, 947, 12, '#333'); R(931, 950, 961, 967, K, C); T('6,1', 933, 959, 965, 17, C); R(1003, 949, 1033, 968, null, '#0a40a0'); T('0,0', 1005, 1031, 965, 17, '#0838b0');
T('Загрузка дробленки', 944, 1056, 982, 12);

document.getElementById('scheme').insertAdjacentHTML('beforeend', out);
```
